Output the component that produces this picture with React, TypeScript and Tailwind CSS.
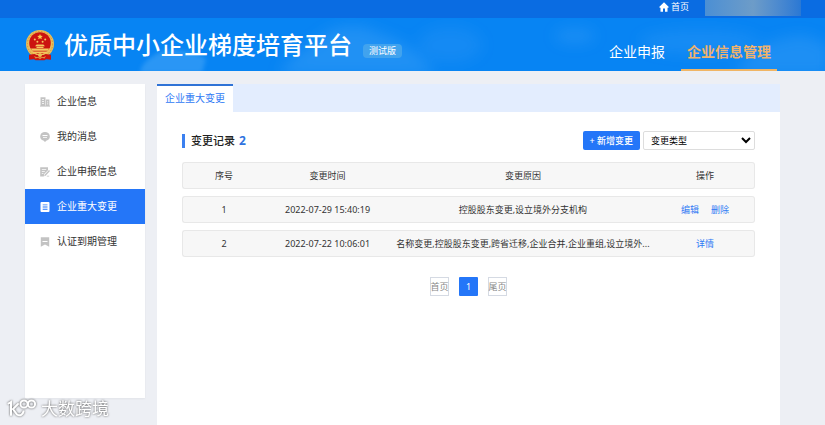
import { useState } from 'react';

const MENU = [
  { label: '企业信息', icon: BuildingIcon },
  { label: '我的消息', icon: MessageIcon },
  { label: '企业申报信息', icon: EditIcon },
  { label: '企业重大变更', icon: DocIcon },
  { label: '认证到期管理', icon: BookmarkIcon },
];

const RECORDS = [
  { id: 1, time: '2022-07-29 15:40:19', reason: '控股股东变更,设立境外分支机构', actions: ['编辑', '删除'] },
  {
    id: 2,
    time: '2022-07-22 10:06:01',
    reason: '名称变更,控股股东变更,跨省迁移,企业合并,企业重组,设立境外...',
    actions: ['详情'],
  },
];

function BuildingIcon() {
  return (
    <svg width="10" height="10" viewBox="0 0 10 10" fill="currentColor">
      <path fillRule="evenodd" d="M.5.2h5V9h-5zM2 2.2h2V3H2zM2 4.2h2V5H2zM2 6.2h2V7H2z" />
      <path fillRule="evenodd" d="M6 2.6h3.4V9H6zM7 4.5h1.2v.8H7zM7 6.5h1.2v.8H7z" />
      <path d="M0 8.6h10v1H0z" />
    </svg>
  );
}

function MessageIcon() {
  return (
    <svg width="10" height="10" viewBox="0 0 10 10" fill="currentColor">
      <path fillRule="evenodd" d="M5 0a5 4.4 0 0 1 1.6 8.5L5 10 3.4 8.5A5 4.4 0 0 1 5 0zM2.5 3h5v.9h-5zM3 5.2h4v.9H3z" />
    </svg>
  );
}

function EditIcon() {
  return (
    <svg width="10" height="10" viewBox="0 0 10 10" fill="currentColor">
      <path fillRule="evenodd" d="M.2.2h7.8v3L4.2 7l-.4 2.6H.2zM1.8 2.2h4.4V3H1.8zM1.8 4.2h3V5h-3zM1.8 6.2h1.6V7H1.8z" />
      <path d="M9 3l1 1-4.4 4.7-1.4.5.4-1.5zM6.8 8.8h2.4v.8H6.8z" />
    </svg>
  );
}

function DocIcon() {
  return (
    <svg width="10" height="10" viewBox="0 0 10 10" fill="currentColor">
      <path fillRule="evenodd" d="M1.5 0h7a1 1 0 0 1 1 1v8a1 1 0 0 1-1 1h-7a1 1 0 0 1-1-1V1a1 1 0 0 1 1-1zM2.7 2.4h4.8v.9H2.7zM2.7 4.6h4.8v.9H2.7zM2.7 6.8h4.8v.9H2.7z" />
    </svg>
  );
}

function BookmarkIcon() {
  return (
    <svg width="10" height="10" viewBox="0 0 10 10" fill="currentColor">
      <path fillRule="evenodd" d="M.8.2h8.4v9.6L5 7.6.8 9.8zM2.5 4h5v.9h-5z" />
    </svg>
  );
}

function HomeIcon() {
  return (
    <svg width="10" height="10" viewBox="0 0 10 10" fill="currentColor">
      <path d="M5 .2l4.8 4.9-.6.7h-.7v4H6V6.6H4v3.2H1.5v-4H.8l-.6-.7z" />
    </svg>
  );
}

function Emblem() {
  return (
    <svg className="shrink-0" width="30" height="32" viewBox="0 0 30 32">
      <circle cx="15" cy="15" r="14" fill="#ecbd58" />
      <circle cx="15" cy="15" r="12.6" fill="none" stroke="#cf9638" strokeWidth="1" strokeDasharray="1.5 1.5" />
      <circle cx="15" cy="14" r="10.8" fill="#cb1410" />
      <path d="M15 5l.8 1.8 2 .2-1.5 1.3.5 2-1.8-1.1-1.8 1.1.5-2-1.5-1.3 2-.2z" fill="#f7cf4f" />
      <g fill="#f3c85e">
        <circle cx="9.8" cy="10.5" r="1" />
        <circle cx="20.2" cy="10.5" r="1" />
        <circle cx="12.4" cy="12.8" r="1" />
        <circle cx="17.6" cy="12.8" r="1" />
        <path d="M10 17.2l1.6-1.8h6.8l1.6 1.8zM11.5 17.8h7v1.2h-7zM6 19.4h18l-1 2.4H7zM8 22.4h14v1.6H8z" />
      </g>
      <path d="M4 25.8l5.5-.8 2 1h7l2-1 5.5.8v5l-5-.6-1.5 1h-9l-1.5-1-5 .6z" fill="#cb1410" />
      <path d="M9 27c2 1.6 10 1.6 12 0l-1.5 2.6-2.5-.8-2 1.4-2-1.4-2.5.8z" fill="#e0913c" />
      <circle cx="15" cy="26" r="2" fill="#ecbd58" />
    </svg>
  );
}

function Header() {
  return (
    <header className="relative overflow-hidden bg-[#0784f3] text-white">
      {/* faint clouds behind the banner */}
      <svg className="absolute inset-0 h-full w-full" viewBox="0 0 825 71" preserveAspectRatio="none">
        <defs>
          <filter id="soft" x="-20%" y="-50%" width="140%" height="200%">
            <feGaussianBlur stdDeviation="7" />
          </filter>
          <filter id="edge" x="-20%" y="-50%" width="140%" height="200%">
            <feGaussianBlur stdDeviation="2" />
          </filter>
        </defs>
        <path d="M140 73c2-12 10-14 18-20 14-6 36-2 48 6l-4 14z" fill="#5fb2f8" opacity=".4" filter="url(#edge)" />
        <g fill="#69b8f8" filter="url(#soft)">
          <path d="M278 75c10-14 20-22 38-34 16-16 42-20 62-8 22 6 40 18 58 42z" opacity=".25" />
          <ellipse cx="450" cy="45" rx="32" ry="18" opacity=".12" />
          <ellipse cx="575" cy="36" rx="20" ry="8" opacity=".18" />
          <ellipse cx="700" cy="42" rx="60" ry="12" opacity=".15" />
          <path d="M735 75c10-20 30-38 70-40l24 10v30z" opacity=".22" />
        </g>
      </svg>
      <div className="relative flex h-[18px] items-start justify-end bg-[#0b69e0]/90 pr-6">
        <a href="#" className="flex items-center gap-0.5 pt-px text-[9px] leading-3">
          <HomeIcon />
          首页
        </a>
        <div className="ml-4 h-4 w-24 bg-linear-to-r from-[#4b8fd4] via-[#6d9cc8] to-[#2a78d4]" />
      </div>
      <div className="relative flex h-[53px] items-end justify-between pr-12 pl-[25px]">
        <div className="flex items-center self-center">
          <Emblem />
          <h1 className="ml-[9px] text-[24px] leading-8 font-medium whitespace-nowrap">优质中小企业梯度培育平台</h1>
          <span className="mt-3 ml-[11px] rounded-sm bg-[#41a3ee] px-1.5 text-[9px] leading-[14px]">测试版</span>
        </div>
        <nav className="flex gap-4 text-[14px] leading-5">
          <a href="#" className="border-b-2 border-transparent pb-[7px]">企业申报</a>
          <a href="#" className="border-b-2 border-[#f0b565] px-1.5 pb-[7px] font-bold text-[#f0b26c]">企业信息管理</a>
        </nav>
      </div>
    </header>
  );
}

function Sidebar() {
  const [active, setActive] = useState('企业重大变更');

  return (
    <aside className="min-h-[314px] w-[120px] shrink-0 self-start bg-white shadow-xs">
      {MENU.map(({ label, icon: Icon }) => (
        <button
          key={label}
          onClick={() => setActive(label)}
          className={`flex h-[35px] w-full items-center gap-[7px] pl-[15px] text-[10px] ${
            active === label ? 'bg-[#2476f8] text-white' : 'text-[#333]'
          }`}
        >
          <span className={active === label ? 'text-white' : 'text-[#c3c3c3]'}>
            <Icon />
          </span>
          {label}
        </button>
      ))}
    </aside>
  );
}

function RecordTable() {
  const cell =
    'border-y border-[#e8e8e8] bg-[#f7f7f7] font-normal whitespace-nowrap first:rounded-l-[3px] first:border-l last:rounded-r-[3px] last:border-r';

  return (
    <table className="-my-[7px] w-full table-fixed border-separate border-spacing-x-0 border-spacing-y-[7px] text-center text-[9px] leading-3 text-[#333]">
      <colgroup>
        <col className="w-[14.5%]" />
        <col className="w-[21.8%]" />
        <col className="w-[46.4%]" />
        <col className="w-[17.3%]" />
      </colgroup>
      <thead>
        <tr className="h-[27px]">
          {['序号', '变更时间', '变更原因', '操作'].map((h) => (
            <th key={h} className={cell}>{h}</th>
          ))}
        </tr>
      </thead>
      <tbody>
        {RECORDS.map((r) => (
          <tr key={r.id} className="h-[27px]">
            <td className={cell}>{r.id}</td>
            <td className={cell}>{r.time}</td>
            <td className={cell}>{r.reason}</td>
            <td className={cell}>
              <div className="flex justify-center gap-3">
                {r.actions.map((a) => (
                  <a key={a} href="#" className="text-[#2f7af5]">{a}</a>
                ))}
              </div>
            </td>
          </tr>
        ))}
      </tbody>
    </table>
  );
}

function Pagination() {
  const edge = 'h-[19px] w-[19px] border border-[#d5dae3] whitespace-nowrap text-[#888]';

  return (
    <nav className="mt-5 flex justify-center gap-2.5 text-[9px]">
      <button className={`${edge} flex items-center justify-center`}>首页</button>
      <button className="h-[19px] w-[19px] rounded-[1px] bg-[#2476f8] text-white">1</button>
      <button className={`${edge} flex items-center justify-center`}>尾页</button>
    </nav>
  );
}

function Watermark() {
  return (
    <div className="fixed bottom-1.5 left-[7px] flex items-center gap-1 text-white drop-shadow-[0_0_1px_#555]">
      <svg width="30" height="20" viewBox="0 0 30 20" fill="none" stroke="currentColor" strokeWidth="2" strokeLinecap="round">
        <path d="M1.5 4.5L4 3v13M11 5l-5 5 4 5.5c3 2 6 0 6.5-3" />
        <circle cx="17" cy="5" r="3.6" />
        <circle cx="24.5" cy="5" r="3.6" />
      </svg>
      <span className="text-[17px] leading-5">大数跨境</span>
    </div>
  );
}

export default function App() {
  return (
    <div className="flex min-h-screen flex-col bg-[#edeff4] font-['Noto_Sans','Noto_Sans_CJK_SC',sans-serif]">
      <Header />
      <div className="flex flex-1 gap-3 pt-[13px] pr-[45px] pl-[25px]">
        <Sidebar />
        <main className="min-w-0 flex-1 bg-white">
          <div className="flex bg-[#e3edfe]">
            <button className="h-7 border-t-2 border-[#2f73d6] bg-white px-2 pb-0.5 text-[10px] text-[#2f7af5]">
              企业重大变更
            </button>
          </div>
          <section className="px-[25px] pt-[19px]">
            <div className="mb-3 flex items-center justify-between">
              <h2 className="flex items-center text-[11px] leading-4 font-medium text-[#222]">
                <span className="mr-1.5 h-3.5 w-[3px] bg-[#3b80f0]" />
                变更记录
                <span className="ml-1 text-[12px] font-bold text-[#2f73e0]">2</span>
              </h2>
              <div className="flex gap-[3px] text-[9px]">
                <button className="h-[19px] rounded-[2px] bg-[#2476f8] px-[7px] font-medium text-white">+ 新增变更</button>
                <select
                  aria-label="变更类型"
                  className="h-[19px] w-28 rounded-[2px] border border-[#ddd] bg-white pl-[3px] text-black"
                >
                  <option>变更类型</option>
                </select>
              </div>
            </div>
            <RecordTable />
            <Pagination />
          </section>
        </main>
      </div>
      <Watermark />
    </div>
  );
}
